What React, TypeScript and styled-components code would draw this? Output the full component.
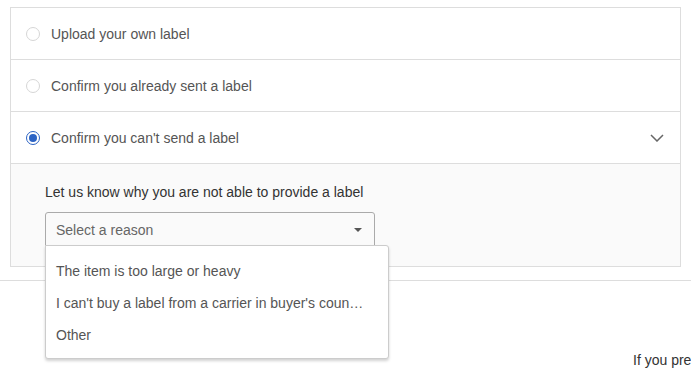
import { createGlobalStyle } from 'styled-components'
import styled from 'styled-components'

const GlobalStyle = createGlobalStyle`
  html, body {
    margin: 0;
    padding: 0;
    background: #ffffff;
    overflow: hidden;
  }
  body {
    font-family: "Liberation Sans", Arial, sans-serif;
    color: #333333;
  }
`

const Page = styled.div`
  width: 691px;
  height: 370px;
  padding-top: 7px;
  box-sizing: border-box;
  position: relative;
  overflow: hidden;
`

const Card = styled.div`
  margin-left: 10px;
  width: 671px;
  box-sizing: border-box;
  border: 1px solid #dddddd;
  border-bottom: none;
`

const Row = styled.div<{ $first?: boolean }>`
  display: flex;
  align-items: center;
  height: ${(p) => (p.$first ? 51 : 52)}px;
  box-sizing: border-box;
  border-top: ${(p) => (p.$first ? 'none' : '1px solid #dddddd')};
  padding: 0 16px 0 15px;
  gap: 11px;
  font-size: 14px;
  color: #555555;
  cursor: pointer;
`

const Radio = styled.span<{ $checked?: boolean }>`
  width: 14px;
  height: 14px;
  box-sizing: border-box;
  border-radius: 50%;
  border: 1px solid ${(p) => (p.$checked ? '#2b63c4' : '#d6d6d6')};
  display: flex;
  align-items: center;
  justify-content: center;
  flex-shrink: 0;

  &::after {
    content: '';
    display: ${(p) => (p.$checked ? 'block' : 'none')};
    width: 8px;
    height: 8px;
    border-radius: 50%;
    background: #2b63c4;
  }
`

const RowLabel = styled.span`
  flex: 1;
  padding-top: 1px;
`

const Chevron = styled.svg`
  width: 14px;
  height: 8px;
`

const Panel = styled.div`
  background: #fafafa;
  border-top: 1px solid #dddddd;
  border-bottom: 1px solid #dddddd;
  padding: 18px 0 20px 34px;
`

const Prompt = styled.div`
  font-size: 14px;
  line-height: 20px;
  color: #333333;
  margin-bottom: 10px;
`

const SelectWrap = styled.div`
  position: relative;
  width: 330px;
`

const SelectBox = styled.div`
  height: 34px;
  box-sizing: border-box;
  border: 1px solid #aaaaaa;
  border-radius: 3px 3px 0 0;
  background: #fafafa;
  display: flex;
  align-items: center;
  justify-content: space-between;
  padding: 1px 10px 0 10px;
  font-size: 14px;
  color: #666666;
`

const Caret = styled.span`
  width: 0;
  height: 0;
  border-left: 4px solid transparent;
  border-right: 4px solid transparent;
  border-top: 4px solid #555555;
  margin-right: 2px;
`

const Menu = styled.ul`
  position: absolute;
  top: 33px;
  left: 0;
  width: 344px;
  box-sizing: border-box;
  margin: 0;
  padding: 9px 0 7px;
  list-style: none;
  background: #ffffff;
  border: 1px solid #cccccc;
  border-radius: 0 3px 3px 3px;
  box-shadow: 0 2px 3px rgba(0, 0, 0, 0.18);
  z-index: 2;
`

const MenuItem = styled.li`
  height: 32px;
  line-height: 32px;
  padding: 0 24px 0 10px;
  font-size: 14px;
  color: #555555;
  white-space: nowrap;
  overflow: hidden;
  text-overflow: ellipsis;
`

const Divider = styled.div`
  margin-top: 13px;
  width: 691px;
  border-top: 1px solid #dddddd;
`

const Footer = styled.div`
  padding-top: 70px;
  padding-left: 633px;
  font-size: 14px;
  line-height: 18px;
  color: #333333;
  white-space: nowrap;
  overflow: hidden;
`

const options = ['Upload your own label', 'Confirm you already sent a label', "Confirm you can't send a label"]

const reasons = [
  'The item is too large or heavy',
  "I can't buy a label from a carrier in buyer's country",
  'Other',
]

export default function App() {
  return (
    <Page>
      <GlobalStyle />
      <Card>
        {options.map((label, i) => (
          <Row key={label} $first={i === 0}>
            <Radio $checked={i === 2} />
            <RowLabel>{label}</RowLabel>
            {i === 2 && (
              <Chevron viewBox="0 0 14 8">
                <polyline points="1,1 7,7 13,1" fill="none" stroke="#666666" strokeWidth="1.5" />
              </Chevron>
            )}
          </Row>
        ))}
        <Panel>
          <Prompt>Let us know why you are not able to provide a label</Prompt>
          <SelectWrap>
            <SelectBox>
              Select a reason
              <Caret />
            </SelectBox>
            <Menu>
              {reasons.map((r) => (
                <MenuItem key={r}>{r}</MenuItem>
              ))}
            </Menu>
          </SelectWrap>
        </Panel>
      </Card>
      <Divider />
      <Footer>If you prefer to ship with your own carrier</Footer>
    </Page>
  )
}
